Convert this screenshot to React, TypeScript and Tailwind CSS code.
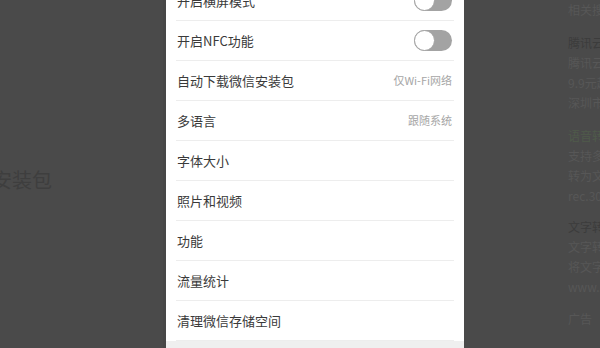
import React from "react";

type Row = { label: string; toggle?: boolean; value?: string };

const rows: Row[] = [
  { label: "开启横屏模式", toggle: true },
  { label: "开启NFC功能", toggle: true },
  { label: "自动下载微信安装包", value: "仅Wi-Fi网络" },
  { label: "多语言", value: "跟随系统" },
  { label: "字体大小" },
  { label: "照片和视频" },
  { label: "功能" },
  { label: "流量统计" },
  { label: "清理微信存储空间" },
];

const sideLines: { text: string; cls: string }[] = [
  { text: "相关搜索", cls: "h-[20px] mb-[13px]" },
  { text: "腾讯云服务器", cls: "h-[20px] text-[#3c3c3c]" },
  { text: "腾讯云服务器", cls: "h-[20px]" },
  { text: "9.9元起", cls: "h-[20px]" },
  { text: "深圳市腾讯", cls: "h-[20px] mb-[13px]" },
  { text: "语音转文字", cls: "h-[20px] text-[#4f5a4a]" },
  { text: "支持多种", cls: "h-[20px]" },
  { text: "转为文字", cls: "h-[20px]" },
  { text: "rec.300.cn", cls: "h-[20px] mb-[11px]" },
  { text: "文字转语音", cls: "h-[20px] text-[#3c3c3c]" },
  { text: "文字转语音", cls: "h-[20px]" },
  { text: "将文字转", cls: "h-[20px]" },
  { text: "www.zz.cn", cls: "h-[20px] mb-[12px]" },
  { text: "广告", cls: "h-[20px]" },
];

function Toggle() {
  return (
    <div className="relative h-[21px] w-[38px] rounded-full bg-[#a3a3a3]">
      <div className="absolute left-0 top-0 h-[21px] w-[21px] rounded-full border border-[#a3a3a3] bg-white" />
    </div>
  );
}

export default function App() {
  return (
    <div
      className="flex h-[348px] w-[600px] overflow-hidden bg-[#4a4a4a]"
      style={{ fontFamily: '"Noto Sans CJK SC", "Noto Sans", sans-serif' }}
    >
      {/* dimmed page, left */}
      <div className="relative w-[166px] shrink-0 border-r-[3px] border-[#474747]">
        <div className="absolute left-[-8px] top-[165px] text-[20px] leading-[30px] text-[#3e3e3e]">
          安装包
        </div>
      </div>

      {/* settings sheet */}
      <div className="flex w-[298px] shrink-0 flex-col bg-white">
        <div className="-mt-[19px] flex flex-col">
          {rows.map((r, i) => (
            <div key={i} className="mx-[10px] flex h-[40px] items-center justify-between border-b border-[#ededed] pl-[1px] pr-[2px]">
              <span className="text-[13px] text-[#3a3a3a]">{r.label}</span>
              {r.toggle && <Toggle />}
              {r.value && <span className="text-[11px] text-[#a6a6a6]">{r.value}</span>}
            </div>
          ))}
        </div>
        <div className="mt-auto h-[8px] bg-[#efefef]" />
      </div>

      {/* dimmed page, right */}
      <div className="w-[136px] shrink-0 pl-[104px]">
        <div className="flex flex-col whitespace-nowrap text-[12px] leading-[20px] text-[#575757]">
          {sideLines.map((l, i) => (
            <div key={i} className={l.cls}>
              {l.text}
            </div>
          ))}
        </div>
      </div>
    </div>
  );
}
